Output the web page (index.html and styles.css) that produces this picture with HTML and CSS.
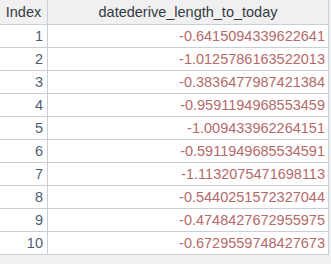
FILE: index.html
```html
<!DOCTYPE html>
<html>
<head>
<meta charset="utf-8">
<link rel="stylesheet" href="styles.css">
</head>
<body>
<table class="grid">
  <thead>
    <tr><th class="idx-h">Index</th><th class="val-h">datederive_length_to_today</th></tr>
  </thead>
  <tbody>
    <tr><td class="idx">1</td><td class="val">-0.6415094339622641</td></tr>
    <tr><td class="idx">2</td><td class="val">-1.0125786163522013</td></tr>
    <tr><td class="idx">3</td><td class="val">-0.3836477987421384</td></tr>
    <tr><td class="idx">4</td><td class="val">-0.9591194968553459</td></tr>
    <tr><td class="idx">5</td><td class="val">-1.009433962264151</td></tr>
    <tr><td class="idx">6</td><td class="val">-0.5911949685534591</td></tr>
    <tr><td class="idx">7</td><td class="val">-1.1132075471698113</td></tr>
    <tr><td class="idx">8</td><td class="val">-0.5440251572327044</td></tr>
    <tr><td class="idx">9</td><td class="val">-0.4748427672955975</td></tr>
    <tr><td class="idx">10</td><td class="val">-0.6729559748427673</td></tr>
  </tbody>
</table>
</body>
</html>
```
FILE: styles.css
```css
html, body {
  margin: 0;
  padding: 0;
  background: #eef0f2;
}
body {
  font-family: "Liberation Sans", Arial, sans-serif;
  font-size: 14.5px;
  width: 331px;
  height: 264px;
  overflow: hidden;
}
.grid {
  border-collapse: collapse;
  width: 329px;
  background: #ffffff;
  table-layout: fixed;
}
.grid th, .grid td {
  border: 1px solid #c9cfd6;
  padding: 0;
  white-space: nowrap;
  overflow: hidden;
}
.grid thead tr {
  height: 24px;
}
.grid tbody tr {
  height: 23px;
}
.grid th {
  background: #f0f0f0;
  color: #333a44;
  font-weight: normal;
  border-top: none;
}
.idx-h {
  width: 47px;
  text-align: center;
  border-left: none !important;
}
.val-h {
  text-align: center;
}
.idx {
  text-align: right;
  padding-right: 4px !important;
  color: #4f5d73;
  border-left: none !important;
}
.val {
  text-align: right;
  padding-right: 3px !important;
  color: #b46a6a;
}
```
